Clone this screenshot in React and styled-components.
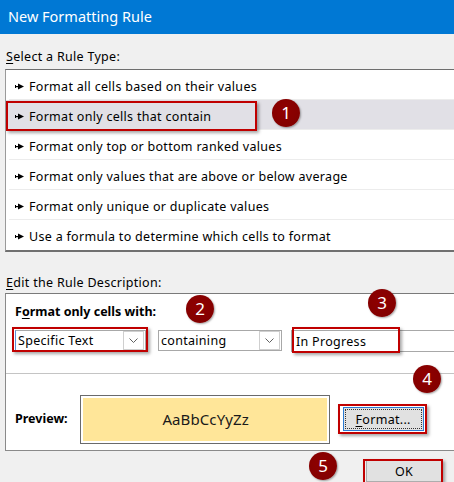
import React from "react";
import styled, { createGlobalStyle } from "styled-components";

const Global = createGlobalStyle`
  html, body { margin: 0; padding: 0; background: #f0f0f0; }
  body { font-family: "Noto Sans", "Segoe UI", sans-serif; font-size: 12.5px; letter-spacing: 0.3px; color: #000; }
  * { box-sizing: border-box; }
`;

const Window = styled.div`
  position: relative;
  width: 454px;
  height: 482px;
  overflow: hidden;
  background: #f0f0f0;
`;

const TitleBar = styled.div`
  height: 34px;
  background: #0078d4;
  color: #fff;
  font-size: 14.5px;
  letter-spacing: 0;
  display: flex;
  align-items: center;
  padding-left: 8px;
  padding-bottom: 2px;
`;

const Body = styled.div`
  padding: 15px 0 0 5px;
`;

const SectionLabel = styled.div`
  height: 16px;
  line-height: 16px;
  padding-left: 1px;
  margin-top: ${(p) => p.$top || 0}px;
  margin-bottom: ${(p) => p.$bottom || 0}px;
  u { text-decoration: underline; text-underline-offset: 2px; }
`;

const RuleList = styled.div`
  width: 470px;
  background: #fff;
  border-top: 1px solid #6e6e6e;
  border-left: 1px solid #9a9a9a;
  border-bottom: 2px solid #707070;
`;

const RuleItem = styled.div`
  position: relative;
  height: 30px;
  display: flex;
  align-items: center;
  gap: 5px;
  padding-left: 9px;
  padding-top: 2px;
  background: ${(p) => (p.$selected ? "#e1e0e6" : "#fff")};
  &:not(:last-child)::after {
    content: "";
    position: absolute;
    left: 3px;
    right: 0;
    bottom: 0;
    height: 1px;
    background: #ececec;
  }
`;

const PointerSvg = styled.svg`
  flex: none;
  width: 9px;
  height: 7px;
`;

const Pointer = () => (
  <PointerSvg viewBox="0 0 9 7">
    <rect x="0" y="2" width="1" height="3" fill="#000" />
    <rect x="0" y="3" width="4" height="1.2" fill="#000" />
    <polygon points="3,0.5 9,3.5 3,6.5" fill="#000" />
  </PointerSvg>
);

const DescPanel = styled.div`
  width: 470px;
  background: #fff;
  border: 1px solid #8a8a8a;
  border-top-color: #7a7a7a;
`;

const CriteriaSection = styled.div`
  height: 80px;
  padding: 10px 0 0 9px;
  border-bottom: 1px solid #c4c4c4;
`;

const BoldLabel = styled.div`
  font-weight: bold;
  letter-spacing: 0;
  height: 16px;
  line-height: 16px;
  flex: none;
  u { text-decoration: underline; text-underline-offset: 2px; }
`;

const ControlRow = styled.div`
  display: flex;
  align-items: center;
  margin-top: 9px;
`;

const Combo = styled.div`
  width: ${(p) => p.$w}px;
  height: 21px;
  margin-right: ${(p) => p.$gap || 0}px;
  border: 1px solid #a8a8a8;
  border-left-color: ${(p) => (p.$focus ? "#5b8fd6" : "#a8a8a8")};
  background: #fff;
  display: flex;
  align-items: center;
  padding-left: 2px;
  justify-content: space-between;
`;

const ComboArrow = styled.div`
  width: 21px;
  height: 19px;
  margin-right: 1px;
  border: 1px solid #cfcfcf;
  display: flex;
  align-items: center;
  justify-content: center;
`;

const Chevron = () => (
  <svg width="9" height="5" viewBox="0 0 9 5">
    <polyline points="0.5,0.5 4.5,4.5 8.5,0.5" fill="none" stroke="#606060" strokeWidth="1" />
  </svg>
);

const TextInput = styled.div`
  flex: 1;
  height: 22px;
  margin-top: 1px;
  border: 1px solid #a8a8a8;
  border-right: none;
  display: flex;
  align-items: center;
  padding-left: 4px;
`;

const PreviewSection = styled.div`
  height: 76px;
  display: flex;
  align-items: center;
  padding: 20px 0 6px 9px;
`;

const PreviewBox = styled.div`
  width: 250px;
  height: 49px;
  margin-left: 12px;
  border: 1px solid #6a6a6a;
  padding: 2px;
  background: #fff;
`;

const PreviewFill = styled.div`
  height: 100%;
  background: #ffe699;
  display: flex;
  align-items: center;
  justify-content: center;
  font-size: 15px;
  letter-spacing: 0.1px;
  color: #1a1a1a;
  padding-left: 2px;
`;

const DlgButton = styled.div`
  width: ${(p) => p.$w}px;
  height: ${(p) => p.$h}px;
  margin-left: ${(p) => p.$ml || 0}px;
  background: #e1e1e1;
  border: 1px solid ${(p) => (p.$focus ? "#2a7ad2" : "#adadad")};
  padding: 2px;
  flex: none;
`;

const ButtonFace = styled.div`
  height: 100%;
  display: flex;
  align-items: center;
  justify-content: center;
  outline: ${(p) => (p.$dotted ? "1px dotted #333" : "none")};
  u { text-decoration: underline; text-underline-offset: 2px; }
`;

const Footer = styled.div`
  display: flex;
  padding: 9px 0 0 361px;
`;

const Mark = styled.div`
  position: absolute;
  left: ${(p) => p.$x}px;
  top: ${(p) => p.$y}px;
  width: ${(p) => p.$w}px;
  height: ${(p) => p.$h}px;
  border: 2px solid #c00000;
  box-shadow: 2px 2px 3px rgba(0, 0, 0, 0.35);
  pointer-events: none;
`;

const Badge = styled.div`
  position: absolute;
  left: ${(p) => p.$cx - 14}px;
  top: ${(p) => p.$cy - 14}px;
  width: 28px;
  height: 28px;
  border-radius: 50%;
  background: radial-gradient(circle at 45% 40%, #900000 0%, #7e0000 100%);
  box-shadow: 1px 1px 2px rgba(0, 0, 0, 0.35);
  color: #fff;
  font-family: "Noto Sans", sans-serif;
  font-size: 17px;
  letter-spacing: 0;
  display: flex;
  align-items: center;
  justify-content: center;
  padding-bottom: 2px;
`;

const rules = [
  "Format all cells based on their values",
  "Format only cells that contain",
  "Format only top or bottom ranked values",
  "Format only values that are above or below average",
  "Format only unique or duplicate values",
  "Use a formula to determine which cells to format",
];

export default function App() {
  return (
    <>
      <Global />
      <Window>
        <TitleBar>New Formatting Rule</TitleBar>
        <Body>
          <SectionLabel $bottom={4}>
            <u>S</u>elect a Rule Type:
          </SectionLabel>
          <RuleList>
            {rules.map((r, i) => (
              <RuleItem key={r} $selected={i === 1}>
                <Pointer />
                {r}
              </RuleItem>
            ))}
          </RuleList>
          <SectionLabel $top={23} $bottom={2}>
            <u>E</u>dit the Rule Description:
          </SectionLabel>
          <DescPanel>
            <CriteriaSection>
              <BoldLabel>
                F<u>o</u>rmat only cells with:
              </BoldLabel>
              <ControlRow>
                <Combo $w={131} $gap={12} $focus>
                  Specific Text
                  <ComboArrow>
                    <Chevron />
                  </ComboArrow>
                </Combo>
                <Combo $w={124} $gap={9}>
                  containing
                  <ComboArrow>
                    <Chevron />
                  </ComboArrow>
                </Combo>
                <TextInput>In Progress</TextInput>
              </ControlRow>
            </CriteriaSection>
            <PreviewSection>
              <BoldLabel>Preview:</BoldLabel>
              <PreviewBox>
                <PreviewFill>AaBbCcYyZz</PreviewFill>
              </PreviewBox>
              <DlgButton $w={81} $h={24} $ml={13} $focus>
                <ButtonFace $dotted>
                  <span>
                    <u>F</u>ormat...
                  </span>
                </ButtonFace>
              </DlgButton>
            </PreviewSection>
          </DescPanel>
          <Footer>
            <DlgButton $w={76} $h={22}>
              <ButtonFace>OK</ButtonFace>
            </DlgButton>
          </Footer>
        </Body>

        <Mark $x={6} $y={101} $w={251} $h={30} />
        <Mark $x={12} $y={327} $w={136} $h={25} />
        <Mark $x={292} $y={327} $w={108} $h={26} />
        <Mark $x={338} $y={404} $w={89} $h={30} />
        <Mark $x={363} $y={459} $w={80} $h={26} />

        <Badge $cx={286} $cy={113}>1</Badge>
        <Badge $cx={200} $cy={309}>2</Badge>
        <Badge $cx={382} $cy={303}>3</Badge>
        <Badge $cx={427} $cy={379}>4</Badge>
        <Badge $cx={323} $cy={466}>5</Badge>
      </Window>
    </>
  );
}
